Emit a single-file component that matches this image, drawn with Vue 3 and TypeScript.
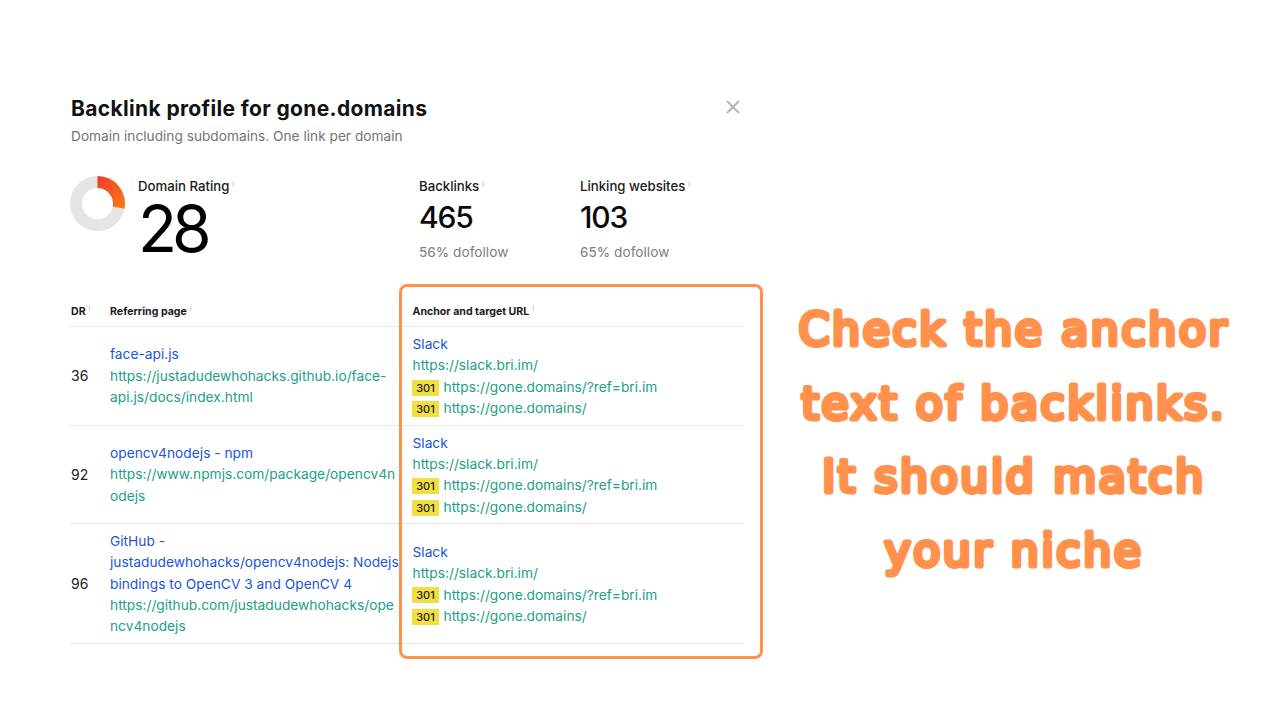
<script setup lang="ts">
interface Row {
  dr: number
  title: string
  url: string
}

const rows: Row[] = [
  { dr: 36, title: 'face-api.js', url: 'https://justadudewhohacks.github.io/face-api.js/docs/index.html' },
  { dr: 92, title: 'opencv4nodejs - npm', url: 'https://www.npmjs.com/package/opencv4nodejs' },
  {
    dr: 96,
    title: 'GitHub - justadudewhohacks/opencv4nodejs: Nodejs bindings to OpenCV 3 and OpenCV 4',
    url: 'https://github.com/justadudewhohacks/opencv4nodejs'
  }
]

const stats = [
  { label: 'Backlinks', value: '465', note: '56% dofollow' },
  { label: 'Linking websites', value: '103', note: '65% dofollow' }
]

const headline = ['Check the anchor', 'text of backlinks.', 'It should match', 'your niche']
</script>

<template>
  <div class="page">
    <section class="panel">
      <header class="panel-head">
        <div>
          <h1>Backlink profile for gone.domains</h1>
          <p class="sub">Domain including subdomains. One link per domain</p>
        </div>
        <svg class="close" width="14" height="14" viewBox="0 0 14 14">
          <path d="M1 1 13 13M13 1 1 13" stroke="#b5b5b5" stroke-width="2" fill="none" />
        </svg>
      </header>

      <div class="stats">
        <div class="rating">
          <svg class="donut" width="55" height="55" viewBox="0 0 55 55">
            <defs>
              <linearGradient id="dr" x1="0" y1="0" x2="1" y2="1">
                <stop offset="0" stop-color="#ef3b2d" />
                <stop offset="1" stop-color="#fb7d10" />
              </linearGradient>
            </defs>
            <circle cx="27.5" cy="27.5" r="21.5" fill="none" stroke="#e5e5e5" stroke-width="12" />
            <path d="M27.5 0A27.5 27.5 0 0 1 54.5 32.65L42.7 30.4A15.5 15.5 0 0 0 27.5 12Z" fill="url(#dr)" />
          </svg>
          <div>
            <div class="stat-label">Domain Rating<i class="info">i</i></div>
            <div class="rating-value">28</div>
          </div>
        </div>
        <div v-for="s in stats" :key="s.label" class="stat">
          <div class="stat-label">{{ s.label }}<i class="info">i</i></div>
          <div class="stat-value">{{ s.value }}</div>
          <div class="stat-note">{{ s.note }}</div>
        </div>
      </div>

      <div class="table">
        <div class="row head">
          <div class="th first">DR<i class="info">i</i></div>
          <div class="th">Referring page<i class="info">i</i></div>
          <div class="th anchor-col">Anchor and target URL<i class="info">i</i></div>
        </div>
        <div v-for="r in rows" :key="r.dr" class="row">
          <div class="dr first">{{ r.dr }}</div>
          <div class="page-cell">
            <a class="blue">{{ r.title }}</a>
            <a class="green">{{ r.url }}</a>
          </div>
          <div class="anchor-col anchor-cell">
            <a class="blue">Slack</a>
            <a class="green">https://slack.bri.im/</a>
            <div class="redirect"><span class="code">301</span><a class="green">https://gone.domains/?ref=bri.im</a></div>
            <div class="redirect"><span class="code">301</span><a class="green">https://gone.domains/</a></div>
          </div>
        </div>
      </div>

      <div class="highlight"></div>
    </section>

    <aside class="headline">
      <svg width="460" height="295" viewBox="0 0 460 295">
        <text v-for="(line, i) in headline" :key="line" x="230" :y="53 + i * 73.7" text-anchor="middle">{{ line }}</text>
      </svg>
    </aside>
  </div>
</template>

<style scoped>
.page {
  width: 1280px;
  height: 720px;
  display: flex;
  background: #fff;
  font-family: Inter, 'Liberation Sans', sans-serif;
  overflow: hidden;
}

.panel {
  position: relative;
  flex: none;
  width: 673px;
  margin-left: 70px;
  padding-top: 96px;
}

.panel-head {
  display: flex;
  justify-content: space-between;
  align-items: flex-start;
}

h1 {
  margin: 0 0 0 1px;
  font-size: 21px;
  line-height: 26px;
  font-weight: 700;
  letter-spacing: 0.35px;
  color: #111;
}

.sub {
  margin: 5px 0 0 1px;
  font-size: 13.7px;
  line-height: 18px;
  color: #737373;
}

.close {
  margin: 4px 3px 0 0;
}

.stats {
  display: flex;
  margin-top: 30px;
  height: 121px;
}

.rating {
  display: flex;
  width: 349px;
  gap: 13px;
}

.donut {
  margin-top: 1px;
}

.stat {
  width: 161px;
}

.stat-label {
  font-size: 13.2px;
  font-weight: 500;
  line-height: 18px;
  color: #1a1a1a;
}

.info {
  font-size: 8px;
  font-style: normal;
  font-weight: 400;
  color: #bbb;
  vertical-align: 4px;
  margin-left: 3px;
}

.rating-value {
  font-size: 64px;
  line-height: 60px;
  font-weight: 400;
  color: #000;
  margin: 4px 0 0;
  letter-spacing: -5px;
}

.stat-value {
  margin-top: 3.5px;
  font-size: 30px;
  line-height: 36px;
  font-weight: 500;
  color: #0a0a0a;
  letter-spacing: -1.2px;
}

.stat-note {
  margin-top: 8.5px;
  font-size: 13.7px;
  line-height: 18px;
  color: #7d7d7d;
}

.row {
  display: grid;
  grid-template-columns: 40px 302px 331px;
  align-items: center;
  border-bottom: 1px solid #e8e8e8;
}

.row.head {
  height: 22px;
  padding: 3px 0 5px;
}

.first {
  padding-left: 1px;
}

.th {
  font-size: 10.6px;
  font-weight: 700;
  color: #1a1a1a;
}

.dr {
  font-size: 14px;
  color: #222;
}

.page-cell,
.anchor-cell {
  display: flex;
  flex-direction: column;
  font-size: 13.75px;
  line-height: 21.4px;
}

.page-cell {
  padding: 6.5px 12px 5.5px 0;
}

.anchor-cell {
  padding: 7px 0 5px;
}

.page-cell a {
  overflow-wrap: anywhere;
  display: block;
}

.anchor-col {
  padding-left: 0.5px;
}

.blue {
  color: #1a56db;
}

.green {
  color: #22a085;
}

.redirect {
  display: flex;
  align-items: center;
  gap: 4.5px;
}

.code {
  width: 27px;
  height: 16px;
  margin-left: -0.5px;
  background: #efdf3f;
  font-size: 11px;
  font-weight: 500;
  line-height: 16px;
  text-align: center;
  color: #222;
}

.highlight {
  position: absolute;
  left: 329px;
  top: 284px;
  width: 358px;
  height: 369px;
  border: 3px solid #ff914d;
  border-radius: 8px;
}

.headline {
  flex: none;
  margin-left: 41px;
  padding-top: 292px;
}

.headline text {
  fill: #ff914d;
  stroke: #ff914d;
  stroke-width: 5px;
  stroke-linejoin: round;
  stroke-linecap: round;
  font-family: 'DejaVu Sans', sans-serif;
  font-size: 44px;
  letter-spacing: 2.7px;
}
</style>
